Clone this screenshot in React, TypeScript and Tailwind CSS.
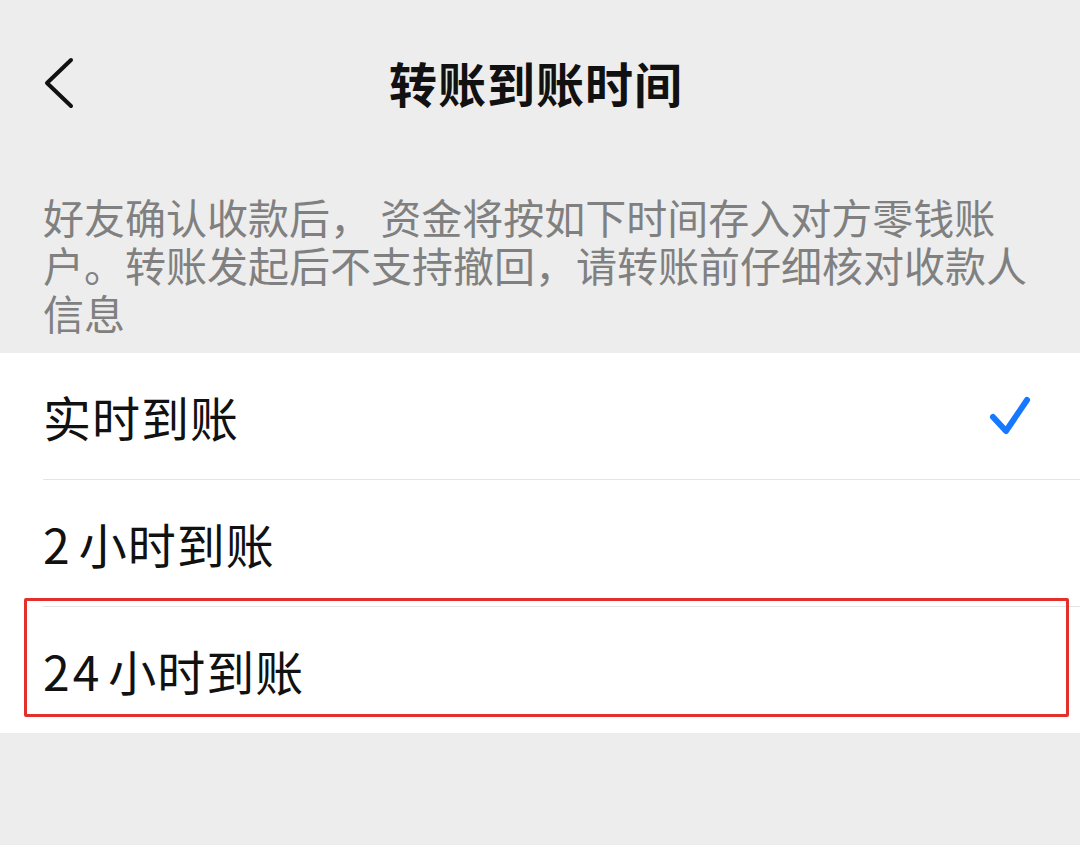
// 转账到账时间 设置页
const options = [
  { num: '', label: '实时到账', checked: true },
  { num: '2', label: '小时到账', checked: false },
  { num: '24', label: '小时到账', checked: false },
];

const App = () => {
  return (
    <div
      className="relative w-[1080px] h-[845px] bg-[#ededed] overflow-hidden"
      style={{ fontFamily: '"Noto Sans CJK SC", "Noto Sans", sans-serif' }}
    >
      {/* 顶部导航栏 */}
      <div className="relative h-[166px] flex items-start justify-center pt-[52px]">
        <svg
          className="absolute left-[40px] top-[56px]"
          width="40"
          height="56"
          viewBox="0 0 40 56"
          fill="none"
        >
          <path d="M31 4 L7 27 L31 50" stroke="#111111" strokeWidth="4" strokeLinecap="round" strokeLinejoin="round" />
        </svg>
        <h1 className="text-[48px] leading-[60px] font-bold text-[#111111] tracking-[1px] -ml-[8px]">转账到账时间</h1>
      </div>

      {/* 说明文字 */}
      <p className="w-[1033px] pl-[43px] mt-[26px] pb-[17px] text-[41px] leading-[48px] text-[#808080]">
        好友确认收款后， 资金将按如下时间存入对方零钱账户。转账发起后不支持撤回，请转账前仔细核对收款人信息
      </p>

      {/* 选项列表 */}
      <div className="bg-white">
        {options.map((opt, i) => (
          <div key={opt.num + opt.label} className="pl-[43px]">
            <div
              className={`h-[126px] flex items-center justify-between pr-[48px] ${
                i < options.length - 1 ? 'border-b border-[#e5e5e5] h-[127px]' : ''
              }`}
            >
              <span className="text-[48px] text-[#111111] tracking-[1px]">
                {opt.num && <span className="tracking-[3px] mr-[6px]">{opt.num}</span>}
                {opt.label}
              </span>
              {opt.checked && (
                <svg width="44" height="44" viewBox="0 0 44 44" fill="none">
                  <path d="M5 23 L18 37 L39 6" stroke="#1677ff" strokeWidth="6" strokeLinecap="round" strokeLinejoin="round" />
                </svg>
              )}
            </div>
          </div>
        ))}
      </div>

      {/* 红色标注框 */}
      <div className="absolute left-[24px] top-[598px] w-[1045px] h-[119px] border-[3px] border-[#e3302b] rounded-[2px]" />
    </div>
  );
};

export default App;
